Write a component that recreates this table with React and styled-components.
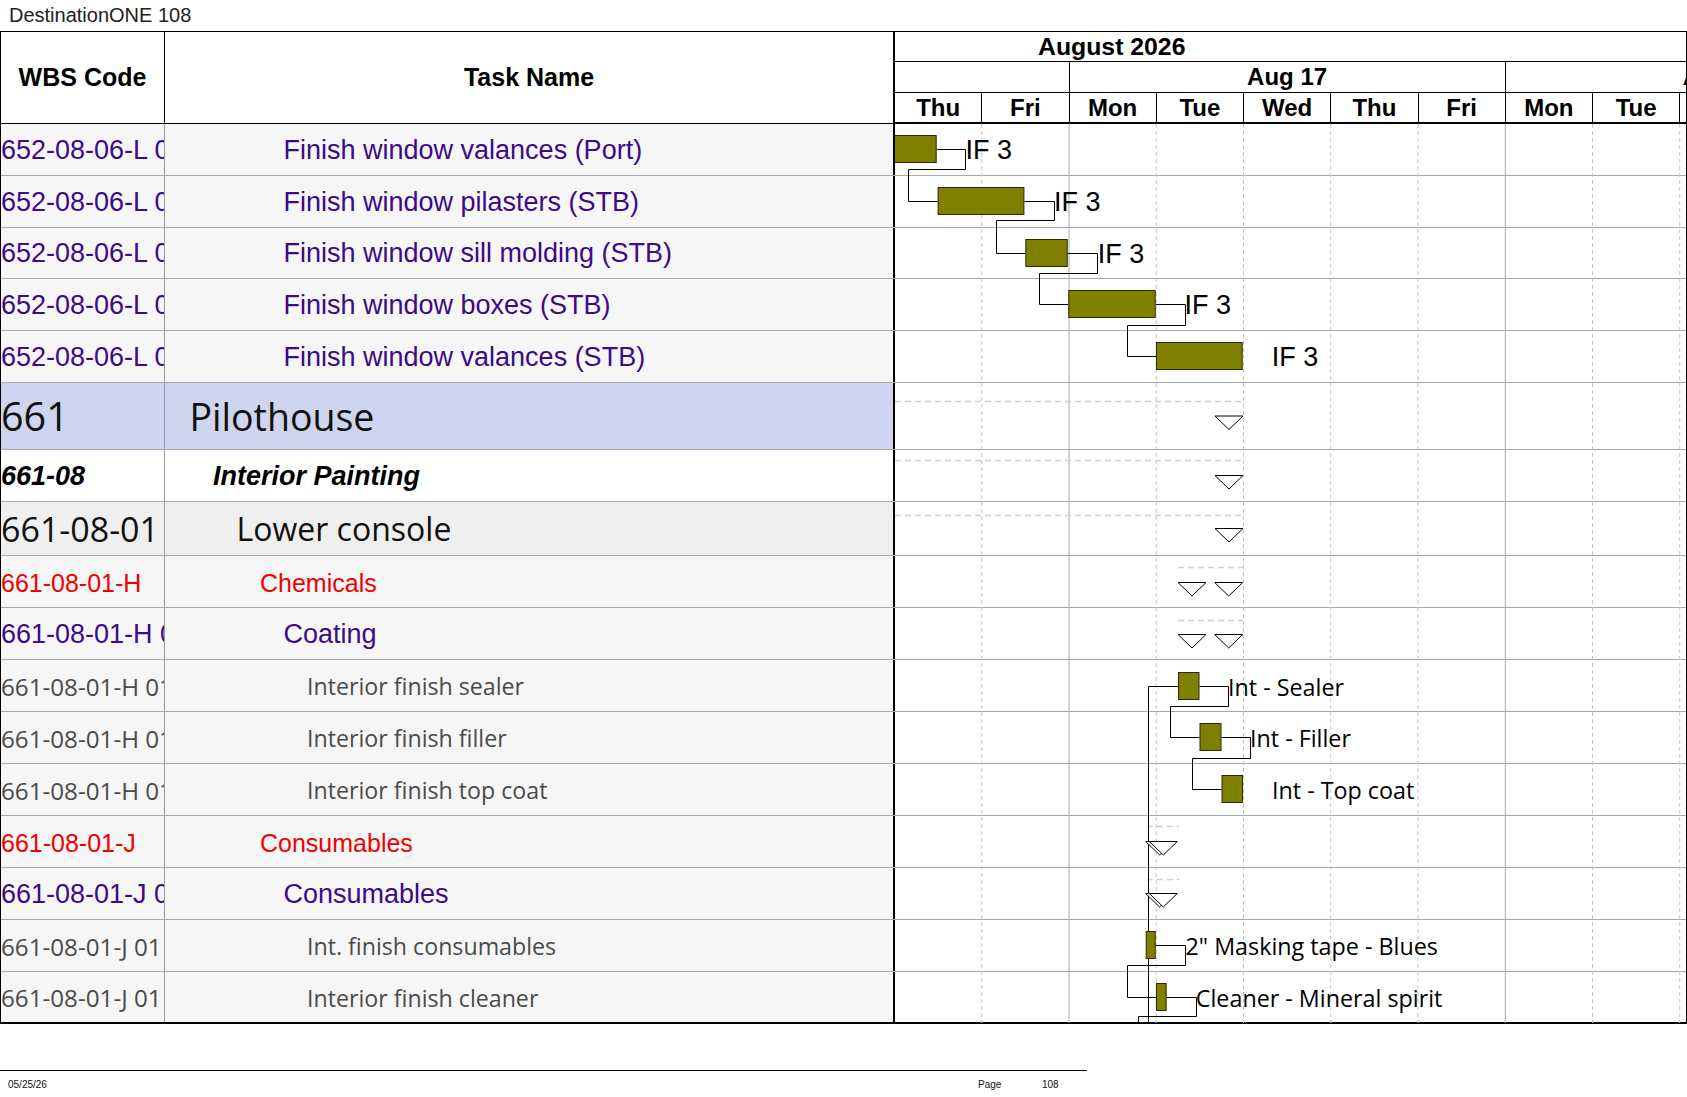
import React from 'react';
import styled, { createGlobalStyle, css } from 'styled-components';

const GlobalStyle = createGlobalStyle`
  html, body {
    margin: 0;
    padding: 0;
    background: #fff;
  }
  body {
    font-family: "Liberation Sans", Arial, sans-serif;
    color: #000;
  }
`;

const ARIAL = `"Liberation Sans", Arial, sans-serif`;
const SEGOE = `"Open Sans", "Noto Sans", sans-serif`;

const X0 = 895;
const DAY = 87.25;
const BODY_TOP = 124;
const BODY_H = 899;
const CHART_W = 791;

const Page = styled.div`
  width: 1687px;
  height: 1097px;
  overflow: hidden;
`;

const Title = styled.div`
  height: 31px;
  display: flex;
  align-items: center;
  padding-left: 9px;
  font-family: ${ARIAL};
  font-size: 20px;
  color: #222;
`;

const Sheet = styled.div`
  border: 1px solid #000;
  border-bottom-width: 2px;
`;

const Header = styled.div`
  display: flex;
  height: 92px;
`;

const HeadCell = styled.div`
  flex: none;
  width: ${p => p.$w}px;
  box-sizing: border-box;
  border-right: ${p => p.$edge ? 2 : 1}px solid #000;
  border-bottom: 1px solid #000;
  display: flex;
  align-items: center;
  justify-content: center;
  font-family: ${ARIAL};
  font-weight: bold;
  font-size: 25px;
`;

const Timescale = styled.div`
  flex: 1;
  min-width: 0;
  overflow: hidden;
  display: flex;
  flex-direction: column;
  font-family: ${ARIAL};
  font-weight: bold;
  font-size: 24px;
`;

const MonthTier = styled.div`
  height: 30px;
  box-sizing: border-box;
  border-bottom: 1px solid #000;
  display: flex;
  align-items: center;
  padding-left: 143px;
  font-size: 24.8px;
`;

const Tier = styled.div`
  height: 31px;
  box-sizing: border-box;
  display: flex;
  border-bottom: ${p => p.$thick ? 2 : 1}px solid #000;
`;

const TierCell = styled.div`
  width: ${p => p.$w}px;
  flex: ${p => p.$grow ? '1 1 0' : 'none'};
  min-width: 0;
  box-sizing: border-box;
  border-right: ${p => p.$open ? 'none' : '1px solid #000'};
  display: flex;
  align-items: center;
  justify-content: ${p => p.$pad ? 'flex-start' : 'center'};
  padding-left: ${p => p.$pad || 0}px;
  overflow: hidden;
  white-space: nowrap;
`;

const Body = styled.div`
  position: relative;
`;

const Row = styled.div`
  display: flex;
  height: ${p => p.$h}px;
  box-sizing: border-box;
  border-bottom: ${p => p.$last ? 'none' : '1px solid #a8a8a8'};
`;

const kinds = {
  task: css`
    font-family: ${ARIAL};
    font-size: 27px;
    color: #3b0b88;
    padding-top: 1px;
  `,
  l1: css`
    font-family: ${SEGOE};
    font-size: 37.5px;
    color: #111;
  `,
  l2: css`
    font-family: ${ARIAL};
    font-size: 27px;
    font-weight: bold;
    font-style: italic;
    color: #000;
    padding-top: 1px;
  `,
  l3: css`
    font-family: ${SEGOE};
    font-size: 32px;
    color: #111;
  `,
  red: css`
    font-family: ${ARIAL};
    font-size: 25px;
    color: #f00000;
    padding-top: 3px;
  `,
  res: css`
    font-family: ${SEGOE};
    font-size: 23.2px;
    color: #4a4a4a;
    padding-top: 1px;
  `,
};

// the code column draws some levels a touch wider than the name column
const wbsSizes = { l1: '39.5px', l3: '34px', res: '24.2px' };

const backgrounds = {
  task: '#f6f6f6',
  l1: '#cfd5ee',
  l2: '#ffffff',
  l3: '#efefef',
  red: '#f6f6f6',
  res: '#f6f6f6',
};

const Cell = styled.div`
  flex: none;
  box-sizing: border-box;
  display: flex;
  align-items: center;
  overflow: hidden;
  white-space: nowrap;
  background: ${p => backgrounds[p.$kind]};
  ${p => kinds[p.$kind]}
`;

const WbsCell = styled(Cell)`
  width: 164px;
  border-right: 1px solid #9a9a9a;
  font-size: ${p => wbsSizes[p.$kind] || null};
`;

const TaskCell = styled(Cell)`
  width: 730px;
  border-right: 2px solid #000;
  padding-left: ${p => p.$indent}px;
`;

const ChartCell = styled.div`
  flex: 1;
  background: #fff;
`;

const ChartLayer = styled.svg`
  position: absolute;
  top: 0;
  left: 894px;
  width: ${CHART_W}px;
  height: ${BODY_H}px;
  pointer-events: none;
`;

const Footer = styled.div`
  width: 1087px;
  margin-top: 46px;
  border-top: 1px solid #000;
  display: grid;
  grid-template-columns: 970px 64px 1fr;
  padding: 8px 0 0 8px;
  box-sizing: border-box;
  font-family: ${ARIAL};
  font-size: 10px;
  color: #111;
`;

const rows = [
  { h: 52, kind: 'task', lvl: 5, wbs: '652-08-06-L 01', name: 'Finish window valances (Port)' },
  { h: 52, kind: 'task', lvl: 5, wbs: '652-08-06-L 02', name: 'Finish window pilasters (STB)' },
  { h: 51, kind: 'task', lvl: 5, wbs: '652-08-06-L 03', name: 'Finish window sill molding (STB)' },
  { h: 52, kind: 'task', lvl: 5, wbs: '652-08-06-L 04', name: 'Finish window boxes (STB)' },
  { h: 52, kind: 'task', lvl: 5, wbs: '652-08-06-L 05', name: 'Finish window valances (STB)' },
  { h: 67, kind: 'l1', lvl: 1, wbs: '661', name: 'Pilothouse' },
  { h: 52, kind: 'l2', lvl: 2, wbs: '661-08', name: 'Interior Painting' },
  { h: 54, kind: 'l3', lvl: 3, wbs: '661-08-01', name: 'Lower console' },
  { h: 52, kind: 'red', lvl: 4, wbs: '661-08-01-H', name: 'Chemicals' },
  { h: 52, kind: 'task', lvl: 5, wbs: '661-08-01-H 01', name: 'Coating' },
  { h: 52, kind: 'res', lvl: 6, wbs: '661-08-01-H 0101', name: 'Interior finish sealer' },
  { h: 52, kind: 'res', lvl: 6, wbs: '661-08-01-H 0102', name: 'Interior finish filler' },
  { h: 52, kind: 'res', lvl: 6, wbs: '661-08-01-H 0103', name: 'Interior finish top coat' },
  { h: 52, kind: 'red', lvl: 4, wbs: '661-08-01-J', name: 'Consumables' },
  { h: 52, kind: 'task', lvl: 5, wbs: '661-08-01-J 01', name: 'Consumables' },
  { h: 52, kind: 'res', lvl: 6, wbs: '661-08-01-J 01 01', name: 'Int. finish consumables' },
  { h: 50, kind: 'res', lvl: 6, wbs: '661-08-01-J 01 02', name: 'Interior finish cleaner' },
];

const days = ['Thu', 'Fri', 'Mon', 'Tue', 'Wed', 'Thu', 'Fri', 'Mon', 'Tue'];

// gantt items, in page coordinates (the svg viewBox matches the page)
const bars = [
  [880, 936.7, 135], [937.6, 1024.4, 187], [1025.3, 1067.7, 239],
  [1068.3, 1155.7, 290], [1156, 1242.7, 342],
  [1178, 1199.5, 672], [1199.5, 1221.5, 723], [1221.5, 1243, 775],
  [1145.7, 1155.7, 931], [1156, 1166.7, 983],
];

const links = [
  '936.7,149.5 965.5,149.5 965.5,169.5 908.5,169.5 908.5,201.5 937.6,201.5',
  '1024.4,201.5 1054.5,201.5 1054.5,220.5 996.5,220.5 996.5,253.5 1025.3,253.5',
  '1067.7,253.5 1097.5,253.5 1097.5,273.5 1039.5,273.5 1039.5,304.5 1068.3,304.5',
  '1155.7,304.5 1185.5,304.5 1185.5,325.5 1127.5,325.5 1127.5,356.5 1156,356.5',
  '1199.5,686.5 1228.5,686.5 1228.5,706.5 1170.5,706.5 1170.5,737.5 1199.5,737.5',
  '1221.5,737.5 1250.5,737.5 1250.5,758.5 1192.5,758.5 1192.5,789.5 1221.5,789.5',
  '1148.5,1030 1148.5,686.5 1178,686.5',
  '1155.7,945.5 1185.5,945.5 1185.5,965.5 1127.5,965.5 1127.5,997.5 1156,997.5',
  '1166.7,997.5 1196.5,997.5 1196.5,1016.5 1138.5,1016.5 1138.5,1030',
];

const labels = [
  [965.5, 158.5, 'IF 3', 'a'], [1054, 210.5, 'IF 3', 'a'], [1097.8, 262.5, 'IF 3', 'a'],
  [1184.5, 313.5, 'IF 3', 'a'], [1271.8, 365.5, 'IF 3', 'a'],
  [1228, 696, 'Int - Sealer', 's'], [1250, 747, 'Int - Filler', 's'],
  [1272, 799, 'Int - Top coat', 's'],
  [1185.5, 955, '2" Masking tape - Blues', 's'], [1195.8, 1007, 'Cleaner - Mineral spirit', 's'],
];

const rollups = [
  [895, 1243, 401.5], [895, 1243, 460.5], [895, 1243, 515.5],
  [1178, 1243, 567.5], [1178, 1243, 620.5], [1146.7, 1179, 826.5], [1146.7, 1179, 879.5],
];

const milestones = [
  [1215, 416], [1215, 475.5], [1215, 528.5],
  [1178, 582.5], [1214.7, 582.5], [1178, 634.5], [1214.7, 634.5],
  [1145.7, 841.5], [1149.3, 841.5], [1145.7, 893.5], [1149.3, 893.5],
];

const Triangle = ({ x, y }) => (
  <polygon
    points={`${x},${y} ${x + 28},${y} ${x + 14},${y + 13.5}`}
    fill="#fff"
    stroke="#000"
    strokeWidth="1"
  />
);

const GanttChart = () => (
  <ChartLayer viewBox={`${X0} ${BODY_TOP} ${CHART_W} ${BODY_H}`}>
    {days.map((d, i) => {
      const x = X0 + (i + 1) * DAY - 0.5;
      const week = i === 1 || i === 6;
      return (
        <line
          key={i}
          x1={x}
          x2={x}
          y1={BODY_TOP}
          y2={BODY_TOP + BODY_H}
          stroke={week ? '#a8a8a8' : '#c4c4c4'}
          strokeDasharray={week ? undefined : '4 3'}
          strokeWidth="1"
        />
      );
    })}
    {rollups.map(([a, b, y], i) => (
      <line key={i} x1={a} x2={b} y1={y} y2={y} stroke="#cfcfcf" strokeWidth="1.5" strokeDasharray="6 4" />
    ))}
    {links.map((p, i) => (
      <polyline key={i} points={p} fill="none" stroke="#000" strokeWidth="1" />
    ))}
    {bars.map(([a, b, y], i) => (
      <rect key={i} x={a + 0.5} y={y + 0.5} width={b - a - 1} height={27} fill="#808000" stroke="#2a2a00" strokeWidth="1" />
    ))}
    {milestones.map(([x, y], i) => <Triangle key={i} x={x} y={y} />)}
    {labels.map(([x, y, t, f], i) => (
      <text
        key={i}
        x={x}
        y={y}
        fill="#000"
        fontFamily={f === 'a' ? ARIAL : SEGOE}
        fontSize={f === 'a' ? 27 : 23.3}
      >
        {t}
      </text>
    ))}
  </ChartLayer>
);

const App = () => (
  <Page>
    <GlobalStyle />
    <Title>DestinationONE 108</Title>
    <Sheet>
      <Header>
        <HeadCell $w={164}>WBS Code</HeadCell>
        <HeadCell $w={730} $edge>Task Name</HeadCell>
        <Timescale>
          <MonthTier>August 2026</MonthTier>
          <Tier>
            <TierCell $w={DAY * 2} />
            <TierCell $w={DAY * 5}>Aug 17</TierCell>
            <TierCell $grow $open $pad={177}>Aug 24</TierCell>
          </Tier>
          <Tier $thick>
            {days.map((d, i) => (
              <TierCell key={i} $w={DAY}>{d}</TierCell>
            ))}
            <TierCell $grow $open />
          </Tier>
        </Timescale>
      </Header>
      <Body>
        {rows.map((r, i) => (
          <Row key={i} $h={r.h} $last={i === rows.length - 1}>
            <WbsCell $kind={r.kind}>{r.wbs}</WbsCell>
            <TaskCell $kind={r.kind} $indent={24.5 + (r.lvl - 1) * 23.5}>{r.name}</TaskCell>
            <ChartCell />
          </Row>
        ))}
        <GanttChart />
      </Body>
    </Sheet>
    <Footer>
      <span>05/25/26</span>
      <span>Page</span>
      <span>108</span>
    </Footer>
  </Page>
);

export default App;
